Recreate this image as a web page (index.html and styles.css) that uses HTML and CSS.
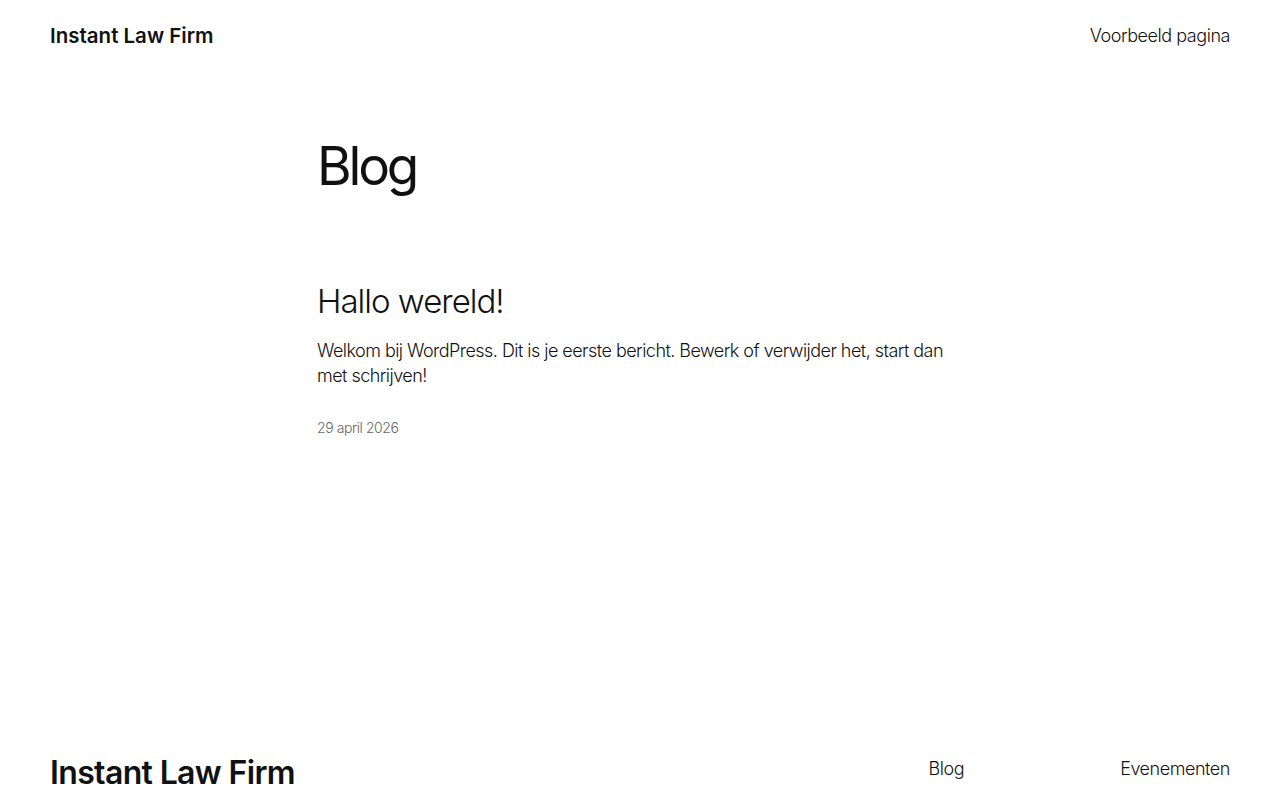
FILE: index.html
```html
<!DOCTYPE html>
<html lang="nl">
<head>
<meta charset="utf-8">
<title>Blog – Instant Law Firm</title>
<link rel="stylesheet" href="styles.css">
</head>
<body>
<header class="site-header">
  <a class="site-title" href="#">Instant Law Firm</a>
  <nav class="header-nav"><a href="#">Voorbeeld pagina</a></nav>
</header>
<main class="main">
  <div class="content">
    <h1 class="page-title">Blog</h1>
    <article class="post">
      <h2 class="post-title"><a href="#">Hallo wereld!</a></h2>
      <p class="excerpt">Welkom bij WordPress. Dit is je eerste bericht. Bewerk of verwijder het, start dan met schrijven!</p>
      <div class="post-date">29 april 2026</div>
    </article>
  </div>
</main>
<footer class="site-footer">
  <a class="footer-title" href="#">Instant Law Firm</a>
  <nav class="footer-nav">
    <a href="#">Blog</a>
    <a href="#">Evenementen</a>
  </nav>
</footer>
</body>
</html>
```
FILE: styles.css
```css
* { box-sizing: border-box; }
html, body { margin: 0; padding: 0; }
body {
  font-family: Inter, "Noto Sans", sans-serif;
  color: #111;
  background: #fff;
  font-weight: 300;
}
a { color: inherit; text-decoration: none; }

.site-header {
  display: flex;
  justify-content: space-between;
  align-items: center;
  height: 70px;
  padding: 0 50px;
}
.site-title {
  font-size: 20.5px;
  font-weight: 600;
  letter-spacing: 0;
}
.header-nav a {
  font-size: 18px;
  letter-spacing: -0.025em;
}

.main {
  min-height: 640px;
}
.content {
  width: 646px;
  margin: 0 auto;
  padding-top: 65px;
}
.page-title {
  margin: 0;
  font-size: 53px;
  font-weight: 400;
  line-height: 1.2;
  letter-spacing: -0.06em;
}
.post {
  padding-top: 83px;
}
.post-title {
  margin: 0;
  font-size: 33px;
  font-weight: 300;
  line-height: 1.2;
  letter-spacing: -0.03em;
}
.excerpt {
  margin: 17px 0 0;
  font-size: 18px;
  line-height: 25px;
  letter-spacing: -0.03em;
}
.post-date {
  margin-top: 31px;
  font-size: 14px;
  color: #666;
  letter-spacing: -0.03em;
}

.site-footer {
  display: flex;
  justify-content: space-between;
  align-items: flex-start;
  padding: 44px 50px 0;
}
.footer-title {
  font-size: 32px;
  font-weight: 600;
  letter-spacing: -0.02em;
  line-height: 1.2;
}
.footer-nav {
  display: flex;
  gap: 156px;
  padding-top: 4px;
}
.footer-nav a {
  font-size: 18px;
  letter-spacing: -0.025em;
}
```
